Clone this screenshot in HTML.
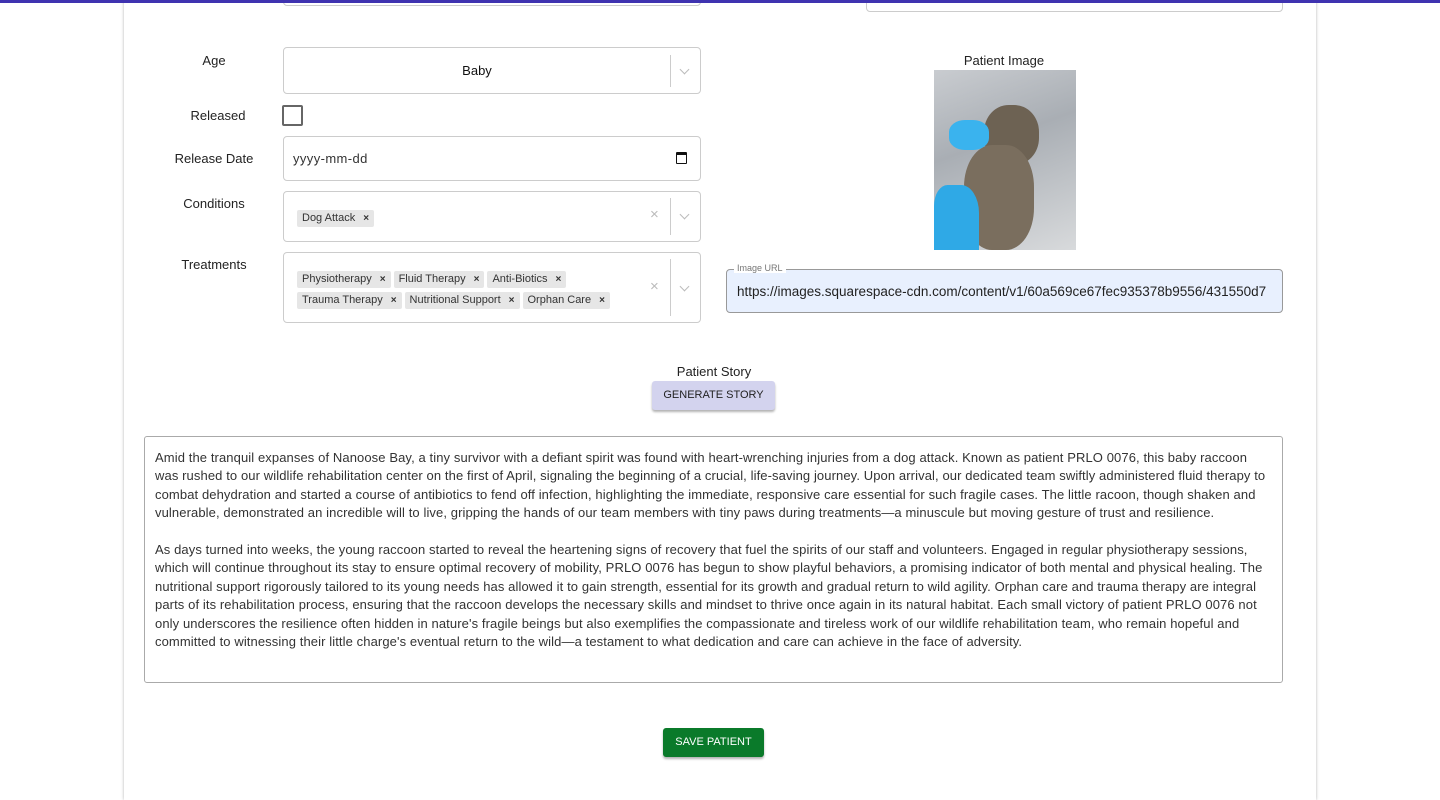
<!DOCTYPE html>
<html><head><meta charset="utf-8"><style>
*{box-sizing:border-box;margin:0;padding:0}
body{width:1440px;height:782px;overflow:hidden;background:#fff;font-family:"Liberation Sans",sans-serif;color:#222;position:relative}
.topbar{position:absolute;left:0;top:0;width:1440px;height:3px;background:#3f33b0;z-index:5}
.card{position:absolute;left:124px;top:0;width:1192px;height:800px;background:#fff;box-shadow:0 0 3px rgba(0,0,0,.3)}
.abs{position:absolute}
.lbl{position:absolute;font-size:13px;color:#222;text-align:center;width:140px}
.box{position:absolute;border:1px solid #ccc;border-radius:4px;background:#fff}
.sep{position:absolute;width:1px;background:#ccc}
.chev{position:absolute;width:7px;height:7px;border-right:1.3px solid #bbb;border-bottom:1.3px solid #bbb;transform:rotate(45deg)}
.clr{position:absolute;color:#bbb;font-size:15px}
.tag{display:inline-block;background:#e6e6e6;font-size:11px;color:#333;padding:2px 5px;margin:0 3px 2px 0;border-radius:2px;line-height:12px}
.tag b{font-size:10px;margin-left:8px}
</style></head><body>
<div class="topbar"></div>
<div class="card"></div>
<div class="box" style="left:283px;top:-10px;width:418px;height:16px"></div>
<div class="box" style="left:866px;top:-10px;width:417px;height:22px"></div>

<div class="lbl" style="left:144px;top:53px">Age</div>
<div class="box" style="left:283px;top:47px;width:418px;height:47px"></div>
<div class="abs" style="left:283px;top:63px;width:388px;text-align:center;font-size:13px;color:#111">Baby</div>
<div class="sep" style="left:670px;top:55px;height:32px"></div>
<div class="chev" style="left:681px;top:66px"></div>

<div class="lbl" style="left:148px;top:108px">Released</div>
<div class="abs" style="left:282px;top:105px;width:21px;height:21px;border:2px solid #666;border-radius:2px"></div>

<div class="lbl" style="left:144px;top:151px">Release Date</div>
<div class="box" style="left:283px;top:136px;width:418px;height:45px"></div>
<div class="abs" style="left:293px;top:151px;font-size:13px;color:#333;letter-spacing:0.4px">yyyy-mm-dd</div>
<div class="abs" style="left:676px;top:152px;width:11px;height:12px;border:1.5px solid #111;border-top-width:3px;border-radius:1px"></div>

<div class="lbl" style="left:144px;top:196px">Conditions</div>
<div class="box" style="left:283px;top:191px;width:418px;height:51px"></div>
<div class="abs" style="left:297px;top:208px"><span class="tag">Dog Attack<b>×</b></span></div>
<div class="clr" style="left:650px;top:206px">×</div>
<div class="sep" style="left:670px;top:198px;height:37px"></div>
<div class="chev" style="left:681px;top:211px"></div>

<div class="lbl" style="left:144px;top:257px">Treatments</div>
<div class="box" style="left:283px;top:252px;width:418px;height:71px"></div>
<div class="abs" style="left:297px;top:269px;width:340px"><span class="tag">Physiotherapy<b>×</b></span><span class="tag">Fluid Therapy<b>×</b></span><span class="tag">Anti-Biotics<b>×</b></span><span class="tag">Trauma Therapy<b>×</b></span><span class="tag">Nutritional Support<b>×</b></span><span class="tag">Orphan Care<b>×</b></span></div>
<div class="clr" style="left:650px;top:278px">×</div>
<div class="sep" style="left:670px;top:259px;height:57px"></div>
<div class="chev" style="left:681px;top:283px"></div>

<div class="abs" style="left:904px;top:53px;width:200px;text-align:center;font-size:13px">Patient Image</div>
<div class="abs" style="left:934px;top:70px;width:142px;height:180px;overflow:hidden;background:linear-gradient(160deg,#c9ccd0 0%,#a9aeb4 40%,#d8dadc 100%)">
<div class="abs" style="left:50px;top:35px;width:55px;height:60px;background:#6d6253;border-radius:45%"></div>
<div class="abs" style="left:30px;top:75px;width:70px;height:105px;background:#7a6e5e;border-radius:40%"></div>
<div class="abs" style="left:0;top:115px;width:45px;height:70px;background:#2fa9e6;border-radius:30% 40% 0 0"></div>
<div class="abs" style="left:15px;top:50px;width:40px;height:30px;background:#3ab3ee;border-radius:40%"></div>
</div>
<div class="abs" style="left:726px;top:269px;width:557px;height:44px;background:#e8f0fe;border:1px solid #999;border-radius:4px"></div>
<div class="abs" style="left:734px;top:263px;font-size:9px;color:#777;background:#fff;padding:0 3px">Image URL</div>
<div class="abs" style="left:737px;top:284px;width:538px;overflow:hidden;white-space:nowrap;font-size:13.5px;color:#222">https://images.squarespace-cdn.com/content/v1/60a569ce67fec935378b9556/431550d7</div>

<div class="abs" style="left:614px;top:364px;width:200px;text-align:center;font-size:13px">Patient Story</div>
<div class="abs" style="left:652px;top:381px;width:123px;height:29px;background:#d3d3ee;border-radius:3px;box-shadow:0 2px 2px rgba(0,0,0,.3);font-size:11px;text-align:center;line-height:29px;color:#222">GENERATE STORY</div>

<div class="abs" style="left:144px;top:436px;width:1139px;height:247px;border:1px solid #aaa;border-radius:3px;padding:12px 10px;font-size:13px;letter-spacing:0.1px;line-height:18.4px;color:#333">
<p>Amid the tranquil expanses of Nanoose Bay, a tiny survivor with a defiant spirit was found with heart-wrenching injuries from a dog attack. Known as patient PRLO 0076, this baby raccoon was rushed to our wildlife rehabilitation center on the first of April, signaling the beginning of a crucial, life-saving journey. Upon arrival, our dedicated team swiftly administered fluid therapy to combat dehydration and started a course of antibiotics to fend off infection, highlighting the immediate, responsive care essential for such fragile cases. The little racoon, though shaken and vulnerable, demonstrated an incredible will to live, gripping the hands of our team members with tiny paws during treatments—a minuscule but moving gesture of trust and resilience.</p><br>
<p>As days turned into weeks, the young raccoon started to reveal the heartening signs of recovery that fuel the spirits of our staff and volunteers. Engaged in regular physiotherapy sessions, which will continue throughout its stay to ensure optimal recovery of mobility, PRLO 0076 has begun to show playful behaviors, a promising indicator of both mental and physical healing. The nutritional support rigorously tailored to its young needs has allowed it to gain strength, essential for its growth and gradual return to wild agility. Orphan care and trauma therapy are integral parts of its rehabilitation process, ensuring that the raccoon develops the necessary skills and mindset to thrive once again in its natural habitat. Each small victory of patient PRLO 0076 not only underscores the resilience often hidden in nature's fragile beings but also exemplifies the compassionate and tireless work of our wildlife rehabilitation team, who remain hopeful and committed to witnessing their little charge's eventual return to the wild—a testament to what dedication and care can achieve in the face of adversity.</p>
</div>

<div class="abs" style="left:663px;top:728px;width:101px;height:29px;background:#0a7a2a;border-radius:3px;box-shadow:0 2px 2px rgba(0,0,0,.3);color:#fff;font-size:11px;text-align:center;line-height:29px">SAVE PATIENT</div>
</body></html>
